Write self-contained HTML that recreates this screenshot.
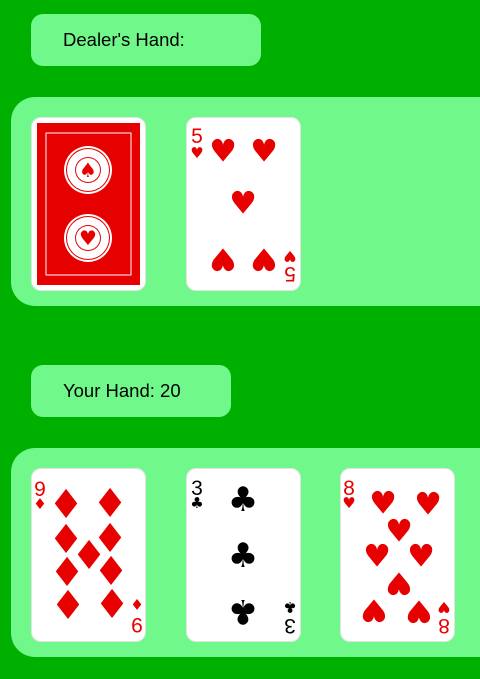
<!DOCTYPE html>
<html><head><meta charset="utf-8"><style>
*{margin:0;padding:0;box-sizing:border-box}
body{width:480px;height:679px;background:#00b000;position:relative;overflow:hidden;font-family:"Liberation Sans","DejaVu Sans",sans-serif}
.lbl{position:absolute;background:#70f88a;border-radius:12px;height:52px;font-size:18.5px;color:#000;padding-left:32px;line-height:52px}
.panel{position:absolute;left:11px;width:480px;height:209px;background:#70f88a;border-radius:24px 0 0 24px}
.card{position:absolute;width:115px;height:174px;background:#fff;border-radius:10px;border:1px solid #e4e4e4;overflow:hidden}
.p{position:absolute;transform:translate(-50%,-50%);font-family:"DejaVu Sans",sans-serif;font-size:31px;line-height:1}
.d{font-size:40px}
.c{font-size:34px}
.inv{transform:translate(-50%,-50%) rotate(180deg)}
.r{color:#e60000}.k{color:#000}
.ci{position:absolute;font-family:"Liberation Sans",sans-serif;font-size:21px;line-height:1;text-align:center;width:14px}
.cs{position:absolute;font-family:"DejaVu Sans",sans-serif;font-size:15px;line-height:1;text-align:center;width:14px}
</style></head><body>
<div class="lbl" style="left:31px;top:14px;width:230px">Dealer's Hand:</div>
<div class="panel" style="top:97px"></div>
<div class="lbl" style="left:31px;top:365px;width:200px">Your Hand: 20</div>
<div class="panel" style="top:448px"></div>

<div class="card" style="left:31px;top:117px">
<svg width="115" height="174" style="position:absolute;left:-1px;top:-1px">
<rect x="6" y="6" width="103" height="162" fill="#e60000"/>
<rect x="15" y="16" width="85" height="142" fill="none" stroke="#fff" stroke-width="1"/>
<g>
<circle cx="57" cy="53" r="24" fill="#fff"/><circle cx="57" cy="53" r="22" fill="#e60000"/><circle cx="57" cy="53" r="21" fill="#fff"/><circle cx="57" cy="53" r="13" fill="#e60000"/><circle cx="57" cy="53" r="12" fill="#fff"/>
<circle cx="57" cy="121" r="24" fill="#fff"/><circle cx="57" cy="121" r="22" fill="#e60000"/><circle cx="57" cy="121" r="21" fill="#fff"/><circle cx="57" cy="121" r="13" fill="#e60000"/><circle cx="57" cy="121" r="12" fill="#fff"/>
</g>
<text x="57" y="60" font-size="20" fill="#e60000" text-anchor="middle" font-family="DejaVu Sans">♠</text>
<text x="57" y="128" font-size="20" fill="#e60000" text-anchor="middle" font-family="DejaVu Sans">♥</text>
</svg>
</div>

<div class="card r" style="left:186px;top:117px">
<div class="ci" style="left:3px;top:8px">5</div><div class="cs" style="left:3px;top:28px">♥</div>
<div class="ci" style="left:96px;top:145px;transform:rotate(180deg)">5</div><div class="cs" style="left:96px;top:130px;transform:rotate(180deg)">♥</div>
<span class="p" style="left:36px;top:34px">♥</span><span class="p" style="left:77px;top:34px">♥</span>
<span class="p" style="left:56px;top:86px">♥</span>
<span class="p inv" style="left:36px;top:140px">♥</span><span class="p inv" style="left:77px;top:140px">♥</span>
</div>

<div class="card r" style="left:31px;top:468px">
<div class="ci" style="left:1px;top:10px">9</div><div class="cs" style="left:1px;top:28px">♦</div>
<div class="ci" style="left:98px;top:145px;transform:rotate(180deg)">9</div><div class="cs" style="left:98px;top:127px;transform:rotate(180deg)">♦</div>
<span class="p d" style="left:34px;top:36px">♦</span><span class="p d" style="left:78px;top:35px">♦</span>
<span class="p d" style="left:34px;top:71px">♦</span><span class="p d" style="left:78px;top:70px">♦</span>
<span class="p d" style="left:57px;top:87px">♦</span>
<span class="p d" style="left:35px;top:104px">♦</span><span class="p d" style="left:79px;top:103px">♦</span>
<span class="p d" style="left:36px;top:137px">♦</span><span class="p d" style="left:80px;top:136px">♦</span>
</div>

<div class="card k" style="left:186px;top:468px">
<div class="ci" style="left:3px;top:9px">3</div><div class="cs" style="left:3px;top:27px">♣</div>
<div class="ci" style="left:96px;top:146px;transform:rotate(180deg)">3</div><div class="cs" style="left:96px;top:130px;transform:rotate(180deg)">♣</div>
<span class="p c" style="left:56px;top:31px">♣</span>
<span class="p c" style="left:56px;top:87px">♣</span>
<span class="p c inv" style="left:56px;top:142px">♣</span>
</div>

<div class="card r" style="left:340px;top:468px">
<div class="ci" style="left:1px;top:9px">8</div><div class="cs" style="left:1px;top:27px">♥</div>
<div class="ci" style="left:96px;top:146px;transform:rotate(180deg)">8</div><div class="cs" style="left:96px;top:130px;transform:rotate(180deg)">♥</div>
<span class="p" style="left:42px;top:35px">♥</span><span class="p" style="left:87px;top:36px">♥</span>
<span class="p" style="left:58px;top:63px">♥</span>
<span class="p" style="left:36px;top:88px">♥</span><span class="p" style="left:80px;top:88px">♥</span>
<span class="p inv" style="left:58px;top:113px">♥</span>
<span class="p inv" style="left:33px;top:140px">♥</span><span class="p inv" style="left:78px;top:141px">♥</span>
</div>
</body></html>
